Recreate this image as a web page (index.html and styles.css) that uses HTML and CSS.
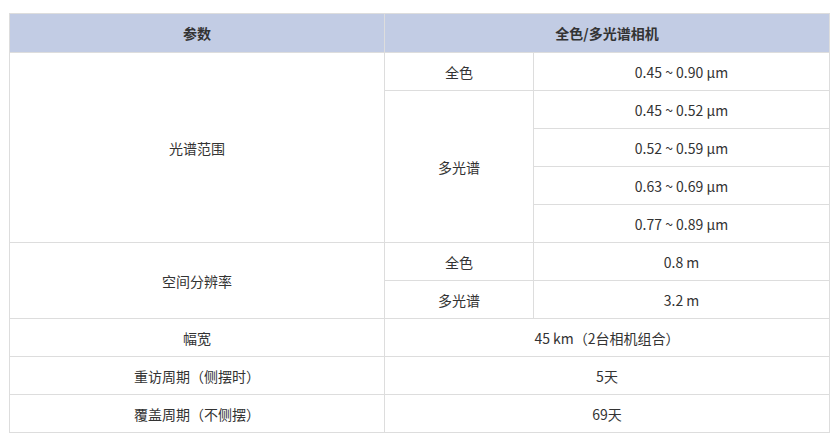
FILE: index.html
```html
<!DOCTYPE html>
<html lang="zh">
<head>
<meta charset="utf-8">
<link rel="stylesheet" href="styles.css">
</head>
<body>
<table class="spec">
  <colgroup>
    <col class="c1"><col class="c2"><col class="c3">
  </colgroup>
  <thead>
    <tr class="head"><th>参数</th><th colspan="2">全色/多光谱相机</th></tr>
  </thead>
  <tbody>
    <tr><td rowspan="5">光谱范围</td><td>全色</td><td>0.45 ~ 0.90 μm</td></tr>
    <tr><td rowspan="4">多光谱</td><td>0.45 ~ 0.52 μm</td></tr>
    <tr><td>0.52 ~ 0.59 μm</td></tr>
    <tr><td>0.63 ~ 0.69 μm</td></tr>
    <tr><td>0.77 ~ 0.89 μm</td></tr>
    <tr><td rowspan="2">空间分辨率</td><td>全色</td><td>0.8 m</td></tr>
    <tr><td>多光谱</td><td>3.2 m</td></tr>
    <tr><td>幅宽</td><td colspan="2">45 km（2台相机组合）</td></tr>
    <tr><td>重访周期（侧摆时）</td><td colspan="2">5天</td></tr>
    <tr><td>覆盖周期（不侧摆）</td><td colspan="2">69天</td></tr>
  </tbody>
</table>
</body>
</html>
```

FILE: styles.css
```css
html, body {
  margin: 0;
  padding: 0;
  background: #ffffff;
}
body {
  padding: 13px 0 0 9px;
  font-family: "Noto Sans CJK SC", "Noto Sans", sans-serif;
  font-size: 14px;
  color: #333333;
}
.spec {
  border-collapse: collapse;
  table-layout: fixed;
  width: 820px;
}
.c1 { width: 375px; }
.c2 { width: 149px; }
.c3 { width: 296px; }
.spec th,
.spec td {
  border: 1px solid #dddddd;
  text-align: center;
  vertical-align: middle;
  padding: 0;
  height: 37px;
  line-height: 20px;
}
.spec th {
  background: #c2cce4;
  font-weight: bold;
  height: 38px;
}
```
